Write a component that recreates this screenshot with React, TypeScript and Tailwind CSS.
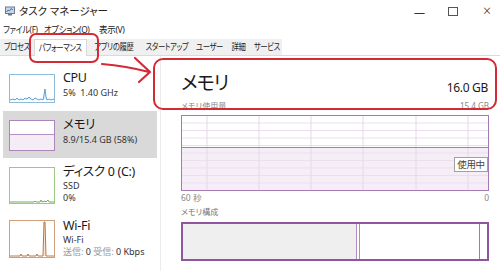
import React from 'react'

const tabs = [
  { label: 'プロセス', w: 'w-[34px]' },
  { label: 'パフォーマンス', w: 'w-[53px]' },
  { label: 'アプリの履歴', w: 'w-[53px]' },
  { label: 'スタートアップ', w: 'w-[53px]' },
  { label: 'ユーザー', w: 'w-[33px]' },
  { label: '詳細', w: 'w-[25px]' },
  { label: 'サービス', w: 'w-[31px]' },
]

function AppIcon() {
  return (
    <svg width="10" height="10" viewBox="0 0 10 10">
      <rect x="0.5" y="1" width="9" height="6.5" fill="#cfd8e3" stroke="#6b7b8f" strokeWidth="1" />
      <polyline points="1.5,6 3,4 4.5,5 6,2.5 8,4" fill="none" stroke="#2b7bd0" strokeWidth="1" />
      <rect x="3" y="8" width="4" height="1.5" fill="#6b7b8f" />
    </svg>
  )
}

function CpuThumb() {
  return (
    <div className="w-[46px] h-[29px] border border-[#8dbbdc] bg-white">
      <svg width="44" height="27" viewBox="0 0 44 27" preserveAspectRatio="none">
        <polyline
          points="0,25 3,24 5,25 7,23 9,25 11,24 13,25 15,23 17,24 19,22 21,24 23,25 25,23 27,24 29,25 31,24 33,25 34,20 35,14 36,22 37,25 39,24 41,25 44,24"
          fill="#e3f0f9"
          stroke="#3a8fc8"
          strokeWidth="0.8"
        />
      </svg>
    </div>
  )
}

function MemThumb() {
  return (
    <div className="w-[46px] h-[31px] border border-[#ac85bb] bg-white flex flex-col">
      <div className="h-[13px]" />
      <div className="flex-1 border-t border-[#b791c4] bg-[#f4edf6]" />
    </div>
  )
}

function DiskThumb() {
  return (
    <div className="w-[46px] h-[37px] border border-[#9bc983] bg-white">
      <svg width="44" height="35" viewBox="0 0 44 35" preserveAspectRatio="none">
        <polyline
          points="0,34 24,34 25,33 26,34 30,34 31,32 32,34 35,33 36,34 38,32 39,34 44,34"
          fill="none"
          stroke="#4f9a2a"
          strokeWidth="0.8"
        />
      </svg>
    </div>
  )
}

function WifiThumb() {
  return (
    <div className="w-[46px] h-[38px] border border-[#cfa07b] bg-white">
      <svg width="44" height="36" viewBox="0 0 44 36" preserveAspectRatio="none">
        <polyline
          points="0,35 10,35 11,33 12,35 17,35 18,33 19,35 26,35 27,33 28,35 33,35 34,1 35,1 36,35 44,35"
          fill="#f6e6d8"
          stroke="#b5682c"
          strokeWidth="0.9"
        />
      </svg>
    </div>
  )
}

function UsageGraph() {
  const vx = [25, 77, 129, 181, 234, 286]
  const hy = [7, 14.5, 22, 29.5, 37, 44.5, 52, 59.5, 67]
  return (
    <div className="relative mt-[2px] h-[76px] border border-[#a579b4] bg-white">
      <svg width="306" height="74" viewBox="0 0 306 74" className="block">
        <rect x="0" y="31" width="306" height="43" fill="#f5eef7" />
        {hy.map((y) => (
          <line key={y} x1="0" x2="306" y1={y} y2={y} stroke="#ebdfee" strokeWidth="1" />
        ))}
        {vx.map((x) => (
          <line key={x} x1={x} x2={x} y1="0" y2="74" stroke="#e6d8ea" strokeWidth="1" />
        ))}
        <line x1="0" x2="306" y1="31.5" y2="31.5" stroke="#a77bb6" strokeWidth="1" />
        <line x1="222" x2="232" y1="30.5" y2="30.5" stroke="#ffffff" strokeWidth="1" />
      </svg>
      {/* hover label */}
      <div className="absolute right-0 top-[41px] h-[15px] w-[34px] text-center bg-white border border-[#a0a0a0] text-[9.5px] leading-[13px] tracking-[-0.3px] text-[#444]">
        使用中
      </div>
    </div>
  )
}

export default function App() {
  return (
    <div className="relative w-[500px] h-[271px] overflow-hidden bg-white text-[#1a1a1a] font-['Noto_Sans','Noto_Sans_CJK_JP',sans-serif] [font-feature-settings:'palt']">
      {/* Title bar */}
      <div className="h-[22px] flex items-center">
        <div className="ml-[5px]">
          <AppIcon />
        </div>
        <span className="ml-[4px] text-[10.5px] leading-none text-[#222]">タスク マネージャー</span>
        <div className="ml-auto flex items-center gap-[24px] pr-[8px] text-[#333]">
          <span className="w-[10px] text-center text-[11px] leading-none">—</span>
          <span className="w-[10px] h-[9px] border border-[#555]" />
          <span className="w-[10px] text-center text-[14px] leading-none font-light">×</span>
        </div>
      </div>

      {/* Menu bar */}
      <div className="h-[17px] flex items-center pl-[3px] text-[9.5px] tracking-[-0.4px] text-[#222] whitespace-nowrap">
        <span className="w-[41px]">
          <span className="inline-block origin-left scale-x-[0.85]">ファイル(F)</span>
        </span>
        <span className="w-[55px]">
          <span className="inline-block origin-left scale-x-[0.88]">オプション(O)</span>
        </span>
        <span>
          <span className="inline-block origin-left scale-x-[0.9]">表示(V)</span>
        </span>
      </div>

      {/* Tabs */}
      <div className="h-[17px] flex border-b border-[#dadada]">
        <div className="flex bg-[#f0f0f0]">
          {tabs.map((t, i) => (
            <div
              key={t.label}
              className={
                i === 1
                  ? `${t.w} -mb-px bg-white border-x border-t border-[#dadada] flex justify-center whitespace-nowrap text-[9px] leading-[16px] tracking-[-0.5px] text-[#222]`
                  : `${t.w} flex justify-center whitespace-nowrap text-[9px] leading-[16px] tracking-[-0.5px] text-[#222]`
              }
            >
              <span className="inline-block scale-x-[0.82]">{t.label}</span>
            </div>
          ))}
        </div>
      </div>

      {/* Body */}
      <div className="flex h-[215px]">
        {/* Sidebar */}
        <div className="w-[161px] border-r border-[#ececec] flex flex-col">
          <div className="mt-[8px] h-[47px] flex pl-[9px]">
            <div className="mt-[10px]">
              <CpuThumb />
            </div>
            <div className="ml-[8px] pt-[6px]">
              <div className="text-[12.5px] leading-[16px] tracking-[-0.3px]">CPU</div>
              <div className="text-[9px] leading-[14px] text-[#333]">5%&nbsp;&nbsp;1.40 GHz</div>
            </div>
          </div>

          <div className="ml-[3px] w-[154px] h-[47px] flex pl-[6px] bg-[#d9d9d9]">
            <div className="mt-[9px]">
              <MemThumb />
            </div>
            <div className="ml-[8px] pt-[6px]">
              <div className="text-[12.5px] leading-[16px] tracking-[-0.3px]">メモリ</div>
              <div className="text-[9px] leading-[14px] text-[#333]">8.9/15.4 GB (58%)</div>
            </div>
          </div>

          <div className="h-[52px] flex pl-[9px]">
            <div className="mt-[9px]">
              <DiskThumb />
            </div>
            <div className="ml-[8px] pt-[6px]">
              <div className="text-[12.5px] leading-[16px] tracking-[-0.3px]">ディスク 0 (C:)</div>
              <div className="text-[9px] leading-[12px] text-[#333]">SSD</div>
              <div className="text-[9px] leading-[12px] text-[#333]">0%</div>
            </div>
          </div>

          <div className="h-[52px] flex pl-[9px]">
            <div className="mt-[10px]">
              <WifiThumb />
            </div>
            <div className="ml-[8px] pt-[8px]">
              <div className="text-[12.5px] leading-[16px] tracking-[-0.3px]">Wi-Fi</div>
              <div className="text-[9px] leading-[12px] text-[#333]">Wi-Fi</div>
              <div className="text-[9px] leading-[12px] text-[#333]">
                <span className="text-[#999]">送信:</span> 0 <span className="text-[#999]">受信:</span> 0 Kbps
              </div>
            </div>
          </div>
        </div>

        {/* Detail panel */}
        <div className="flex-1 pl-[20px] pr-[11px] flex flex-col">
          <div className="mt-[13px] h-[28px] flex items-end justify-between">
            <span className="text-[19px] leading-[28px] tracking-[-1px]">メモリ</span>
            <span className="text-[12px] leading-[18px] tracking-[-0.3px] pr-[1px]">16.0 GB</span>
          </div>
          <div className="mt-[2px] flex justify-between text-[8px] leading-[14px] text-[#888]">
            <span>メモリ使用量</span>
            <span>15.4 GB</span>
          </div>
          <UsageGraph />
          <div className="flex justify-between text-[8.5px] leading-[14px] text-[#888]">
            <span>60 秒</span>
            <span>0</span>
          </div>
          <div className="text-[8px] leading-[14px] text-[#777]">メモリ構成</div>
          <div className="mt-[3px] h-[39px] border-2 border-[#8f559f] flex">
            <div className="w-[174px] bg-[#f0eff0] border-r border-[#b48bc0]" />
            <div className="w-[2px]" />
            <div className="flex-1 border-l border-[#b48bc0]" />
            <div className="w-[8px] border-l border-[#a577b3]" />
          </div>
        </div>
      </div>

      {/* Red annotations */}
      <div className="absolute left-[29px] top-[33px] w-[70px] h-[30px] border-2 border-[#d42a36] rounded-[7px]" />
      <div className="absolute left-[153px] top-[58px] w-[344px] h-[52px] border-2 border-[#d42a36] rounded-[10px]" />
      <svg className="absolute left-0 top-0" width="500" height="271" viewBox="0 0 500 271">
        <path
          d="M102 64 Q126 66 149 72 M135 58 L150 72 L139 82"
          fill="none"
          stroke="#d42a36"
          strokeWidth="2.2"
          strokeLinecap="round"
          strokeLinejoin="round"
        />
      </svg>
    </div>
  )
}
